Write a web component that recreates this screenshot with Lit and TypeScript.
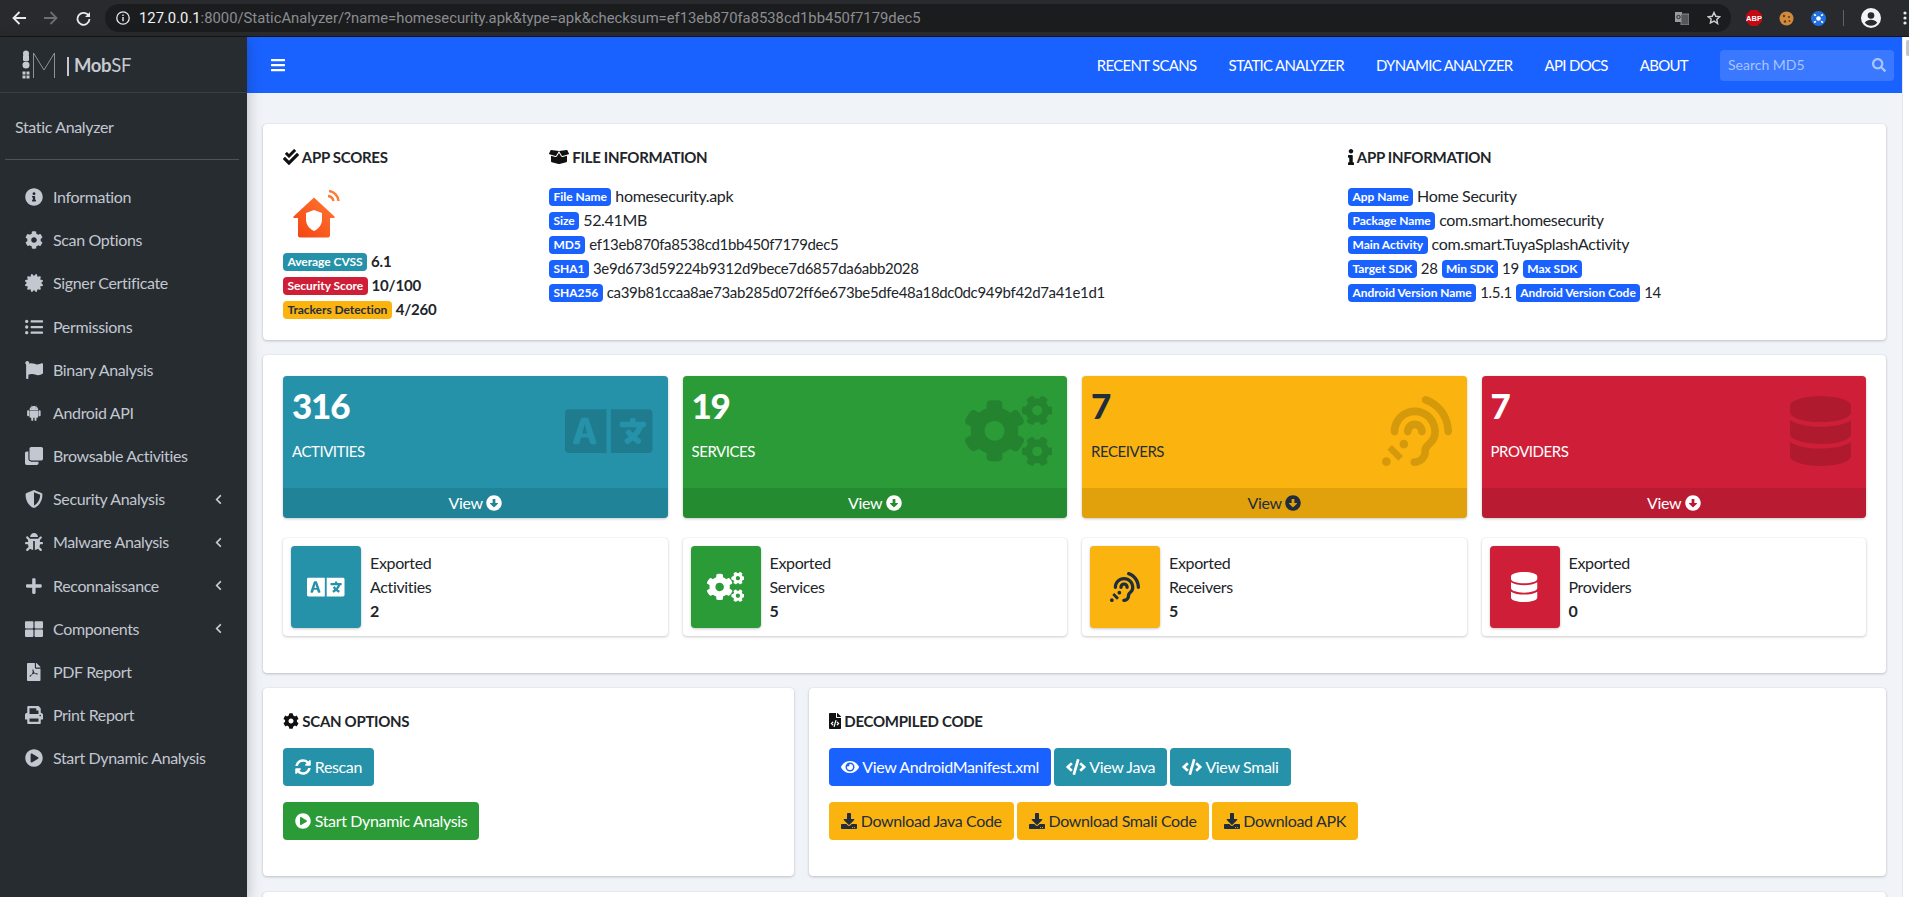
import { LitElement, html, css, svg } from 'lit';
import { customElement } from 'lit/decorators.js';

// font awesome 5 solid shapes, [viewBox width, path]
const FA: Record<string, [number, string]> = {
  info: [512, 'M256 8C119.043 8 8 119.083 8 256c0 136.997 111.043 248 248 248s248-111.003 248-248C504 119.083 392.957 8 256 8zm0 110c23.196 0 42 18.804 42 42s-18.804 42-42 42-42-18.804-42-42 18.804-42 42-42zm56 254c0 6.627-5.373 12-12 12h-88c-6.627 0-12-5.373-12-12v-24c0-6.627 5.373-12 12-12h12v-64h-12c-6.627 0-12-5.373-12-12v-24c0-6.627 5.373-12 12-12h64c6.627 0 12 5.373 12 12v100h12c6.627 0 12 5.373 12 12v24z'],
  cog: [512, 'M487.4 315.7l-42.6-24.6c4.3-23.2 4.3-47 0-70.2l42.6-24.6c4.9-2.8 7.1-8.6 5.5-14-11.1-35.6-30-67.8-54.7-94.6-3.8-4.1-10-5.1-14.8-2.3L380.8 110c-17.9-15.4-38.5-27.3-60.8-35.1V25.8c0-5.6-3.9-10.5-9.4-11.7-36.7-8.2-74.3-7.8-109.2 0-5.5 1.2-9.4 6.1-9.4 11.7V75c-22.2 7.9-42.8 19.8-60.8 35.1L88.7 85.5c-4.9-2.8-11-1.9-14.8 2.3-24.7 26.7-43.6 58.9-54.7 94.6-1.7 5.4.6 11.2 5.5 14L67.3 221c-4.3 23.2-4.3 47 0 70.2l-42.6 24.6c-4.9 2.8-7.1 8.6-5.5 14 11.1 35.6 30 67.8 54.7 94.6 3.8 4.1 10 5.1 14.8 2.3l42.6-24.6c17.9 15.4 38.5 27.3 60.8 35.1v49.2c0 5.6 3.9 10.5 9.4 11.7 36.7 8.2 74.3 7.8 109.2 0 5.5-1.2 9.4-6.1 9.4-11.7v-49.2c22.2-7.9 42.8-19.8 60.8-35.1l42.6 24.6c4.9 2.8 11 1.9 14.8-2.3 24.7-26.7 43.6-58.9 54.7-94.6 1.5-5.5-.7-11.3-5.6-14.1zM256 336c-44.1 0-80-35.9-80-80s35.9-80 80-80 80 35.9 80 80-35.9 80-80 80z'],
  certificate: [512, 'M458.622 255.92l45.985-45.005c13.708-12.977 7.316-36.039-10.664-40.339l-62.65-15.99 17.661-62.015c4.991-17.838-11.829-34.663-29.661-29.671l-61.994 17.667-15.984-62.671C337.085.197 313.765-6.276 300.99 7.228L256 53.57 211.011 7.229c-12.63-13.351-36.047-7.234-40.325 10.668l-15.984 62.671-61.995-17.667C74.87 57.907 58.056 74.738 63.046 92.572l17.661 62.015-62.65 15.99C.069 174.878-6.31 197.944 7.392 210.915l45.985 45.005-45.985 45.004c-13.708 12.977-7.316 36.039 10.664 40.339l62.65 15.99-17.661 62.015c-4.991 17.838 11.829 34.663 29.661 29.671l61.994-17.667 15.984 62.671c4.439 18.575 27.696 24.018 40.325 10.668L256 458.61l44.989 46.001c12.5 13.488 35.987 7.486 40.325-10.668l15.984-62.671 61.994 17.667c17.832 4.992 34.652-11.833 29.661-29.671l-17.661-62.015 62.65-15.99c17.98-4.3 24.372-27.362 10.664-40.339l-45.984-45.004z'],
  list: [512, 'M48 48a48 48 0 1 0 48 48 48 48 0 0 0-48-48zm0 160a48 48 0 1 0 48 48 48 48 0 0 0-48-48zm0 160a48 48 0 1 0 48 48 48 48 0 0 0-48-48zm448 16H176a16 16 0 0 0-16 16v32a16 16 0 0 0 16 16h320a16 16 0 0 0 16-16v-32a16 16 0 0 0-16-16zm0-320H176a16 16 0 0 0-16 16v32a16 16 0 0 0 16 16h320a16 16 0 0 0 16-16V80a16 16 0 0 0-16-16zm0 160H176a16 16 0 0 0-16 16v32a16 16 0 0 0 16 16h320a16 16 0 0 0 16-16v-32a16 16 0 0 0-16-16z'],
  flag: [512, 'M349.565 98.783C295.978 98.783 251.721 64 184.348 64c-24.955 0-47.309 4.384-68.045 12.013a55.947 55.947 0 0 0 3.586-23.562C118.117 24.015 94.806 1.206 66.338.048 34.345-1.254 8 24.296 8 56c0 19.026 9.497 35.825 24 45.945V488c0 13.255 10.745 24 24 24h16c13.255 0 24-10.745 24-24v-94.4c28.311-12.064 63.582-22.122 114.435-22.122 53.588 0 97.844 34.783 165.217 34.783 48.169 0 86.667-16.294 122.505-40.858C506.84 359.452 512 349.571 512 339.045v-243.1c0-23.393-24.269-38.87-45.485-29.016-34.338 15.948-76.454 31.854-116.95 31.854z'],
  android: [448, 'M89.6 204.5v115.8c0 15.4-12.1 27.7-27.5 27.7-15.3 0-30.1-12.4-30.1-27.7V204.5c0-15.1 14.8-27.5 30.1-27.5 15.1 0 27.5 12.4 27.5 27.5zm10.8 157c0 16.4 13.2 29.6 29.6 29.6h19.9l.3 61.1c0 36.9 55.2 36.6 55.2 0v-61.1h37.2v61.1c0 36.7 55.5 36.8 55.5 0v-61.1h20.2c16.2 0 29.4-13.2 29.4-29.6V182.1H100.4v179.4zm248-189.1H99.3c0-42.8 25.6-80 63.6-99.4l-19.1-35.3c-2.8-4.9 4.3-8 6.7-3.8l19.4 35.6c34.9-15.5 75-14.7 108.3 0L297.5 34c2.5-4.3 9.5-1.1 6.7 3.8L285.1 73c37.7 19.4 63.3 56.6 63.3 99.4zm-170.7-55.5c0-5.7-4.6-10.5-10.5-10.5-5.7 0-10.2 4.8-10.2 10.5s4.6 10.5 10.2 10.5c5.9 0 10.5-4.8 10.5-10.5zm113.4 0c0-5.7-4.6-10.5-10.2-10.5-5.9 0-10.5 4.8-10.5 10.5s4.6 10.5 10.5 10.5c5.6 0 10.2-4.8 10.2-10.5zm94.8 60.1c-15.1 0-27.5 12.1-27.5 27.5v115.8c0 15.4 12.4 27.7 27.5 27.7 15.4 0 30.1-12.4 30.1-27.7V204.5c0-15.4-14.8-27.5-30.1-27.5z'],
  clone: [512, 'M464 0c26.51 0 48 21.49 48 48v288c0 26.51-21.49 48-48 48H176c-26.51 0-48-21.49-48-48V48c0-26.51 21.49-48 48-48h288M176 416c-44.112 0-80-35.888-80-80V128H48c-26.51 0-48 21.49-48 48v288c0 26.51 21.49 48 48 48h288c26.51 0 48-21.49 48-48v-48H176z'],
  shield: [512, 'M466.5 83.7l-192-80a48.15 48.15 0 0 0-36.9 0l-192 80C27.7 91.1 16 108.6 16 128c0 198.5 114.5 335.7 221.5 380.3 11.8 4.9 25.1 4.9 36.9 0C360.1 472.6 496 349.3 496 128c0-19.4-11.7-36.9-29.5-44.3zM256.1 446.3l-.1-381 175.9 73.3c-3.3 151.4-82.1 261.1-175.8 307.7z'],
  bug: [512, 'M511.988 288.9c-.478 17.43-15.217 31.1-32.653 31.1H424v16c0 21.864-4.882 42.584-13.6 61.145l60.228 60.228c12.496 12.497 12.496 32.758 0 45.255-12.498 12.497-32.759 12.496-45.256 0l-54.736-54.736C345.886 467.965 314.351 480 280 480V236c0-6.627-5.373-12-12-12h-24c-6.627 0-12 5.373-12 12v244c-34.351 0-65.886-12.035-90.636-32.108l-54.736 54.736c-12.498 12.497-32.759 12.496-45.256 0-12.496-12.497-12.496-32.758 0-45.255l60.228-60.228C92.882 378.584 88 357.864 88 336v-16H32.666C15.23 320 .491 306.33.013 288.9-.484 270.816 14.028 256 32 256h56v-58.745l-46.628-46.628c-12.496-12.497-12.496-32.758 0-45.255 12.498-12.497 32.758-12.497 45.256 0L141.255 160h229.489l54.627-54.627c12.498-12.497 32.758-12.497 45.256 0 12.496 12.497 12.496 32.758 0 45.255L424 197.255V256h56c17.972 0 32.484 14.816 31.988 32.9zM257 0c-61.856 0-112 50.144-112 112h224C369 50.144 318.856 0 257 0z'],
  plus: [448, 'M416 208H272V64c0-17.67-14.33-32-32-32h-32c-17.67 0-32 14.33-32 32v144H32c-17.67 0-32 14.33-32 32v32c0 17.67 14.33 32 32 32h144v144c0 17.67 14.33 32 32 32h32c17.67 0 32-14.33 32-32V304h144c17.67 0 32-14.33 32-32v-32c0-17.67-14.33-32-32-32z'],
  grid: [512, 'M296 32h192c13.255 0 24 10.745 24 24v160c0 13.255-10.745 24-24 24H296c-13.255 0-24-10.745-24-24V56c0-13.255 10.745-24 24-24zm-80 0H24C10.745 32 0 42.745 0 56v160c0 13.255 10.745 24 24 24h192c13.255 0 24-10.745 24-24V56c0-13.255-10.745-24-24-24zM0 296v160c0 13.255 10.745 24 24 24h192c13.255 0 24-10.745 24-24V296c0-13.255-10.745-24-24-24H24c-13.255 0-24 10.745-24 24zm296 184h192c13.255 0 24-10.745 24-24V296c0-13.255-10.745-24-24-24H296c-13.255 0-24 10.745-24 24v160c0 13.255 10.745 24 24 24z'],
  pdf: [384, 'M224 136V0H24C10.7 0 0 10.7 0 24v464c0 13.3 10.7 24 24 24h336c13.3 0 24-10.7 24-24V160H248c-13.2 0-24-10.8-24-24zm-40 60c8 30 22 70 40 95 24 0 62-4 76 8 14 12 6 30-14 30-22 0-50-14-70-28-26 6-50 14-72 26-20 36-38 62-56 62-16 0-24-20-8-34 12-10 34-20 52-28 12-22 24-50 32-78-8-22-14-58-2-66 10-8 20 0 22 13zM384 121.9v6.1H256V0h6.1c6.4 0 12.5 2.5 17 7l97.9 98c4.5 4.5 7 10.6 7 16.9z'],
  print: [512, 'M448 192V77.25c0-8.49-3.37-16.62-9.37-22.63L393.37 9.37c-6-6-14.14-9.37-22.63-9.37H96C78.33 0 64 14.33 64 32v160c-35.35 0-64 28.65-64 64v112c0 8.84 7.16 16 16 16h48v96c0 17.67 14.33 32 32 32h320c17.67 0 32-14.33 32-32v-96h48c8.84 0 16-7.16 16-16V256c0-35.35-28.65-64-64-64zm-64 256H128v-96h256v96zm0-224H128V64h192v48c0 8.84 7.16 16 16 16h48v96zm48 72c-13.25 0-24-10.75-24-24 0-13.26 10.75-24 24-24s24 10.74 24 24c0 13.25-10.75 24-24 24z'],
  play: [512, 'M256 8C119 8 8 119 8 256s111 248 248 248 248-111 248-248S393 8 256 8zm115.7 272l-176 101c-15.8 8.8-35.7-2.5-35.7-21V152c0-18.4 19.8-29.8 35.7-21l176 107c16.4 9.2 16.4 32.9 0 42z'],
  chevron: [320, 'M34.52 239.03L228.87 44.69c9.37-9.37 24.57-9.37 33.94 0l22.67 22.67c9.36 9.36 9.37 24.52.04 33.9L131.49 256l154.02 154.75c9.34 9.38 9.32 24.54-.04 33.9l-22.67 22.67c-9.37 9.37-24.57 9.37-33.94 0L34.52 272.97c-9.37-9.37-9.37-24.57 0-33.94z'],
  bars: [448, 'M16 132h416c8.837 0 16-7.163 16-16V76c0-8.837-7.163-16-16-16H16C7.163 60 0 67.163 0 76v40c0 8.837 7.163 16 16 16zm0 160h416c8.837 0 16-7.163 16-16v-40c0-8.837-7.163-16-16-16H16c-8.837 0-16 7.163-16 16v40c0 8.837 7.163 16 16 16zm0 160h416c8.837 0 16-7.163 16-16v-40c0-8.837-7.163-16-16-16H16c-8.837 0-16 7.163-16 16v40c0 8.837 7.163 16 16 16z'],
  search: [512, 'M505 442.7L405.3 343c-4.5-4.5-10.6-7-17-7H372c27.6-35.3 44-79.7 44-128C416 93.1 322.9 0 208 0S0 93.1 0 208s93.1 208 208 208c48.3 0 92.7-16.4 128-44v16.3c0 6.4 2.5 12.5 7 17l99.7 99.7c9.4 9.4 24.6 9.4 33.9 0l28.3-28.3c9.4-9.4 9.4-24.6.1-34zM208 336c-70.7 0-128-57.2-128-128 0-70.7 57.2-128 128-128 70.7 0 128 57.2 128 128 0 70.7-57.2 128-128 128z'],
  checks: [512, 'M505 174.8l-39.6-39.6c-9.4-9.4-24.6-9.4-33.9 0L192 374.7 80.6 263.2c-9.4-9.4-24.6-9.4-33.9 0L7 302.9c-9.4 9.4-9.4 24.6 0 34L175 505c9.4 9.4 24.6 9.4 33.9 0l296-296.2c9.4-9.5 9.4-24.7.1-34zm-324.3 106c6.2 6.3 16.4 6.3 22.6 0l208-208.2c6.2-6.3 6.2-16.4 0-22.6L366.1 4.7c-6.2-6.3-16.4-6.3-22.6 0L192 156.2l-55.4-55.5c-6.2-6.3-16.4-6.3-22.6 0L68.7 146c-6.2 6.3-6.2 16.4 0 22.6l112 112.2z'],
  box: [640, 'M425.7 256c-16.9 0-32.8-9-41.4-23.4L320 126l-64.2 106.6c-8.7 14.5-24.6 23.5-41.5 23.5-4.5 0-9-.6-13.3-1.9L64 215v178c0 14.7 10 27.5 24.2 31l216.2 54.1c10.2 2.5 20.9 2.5 31 0L551.8 424c14.2-3.6 24.2-16.4 24.2-31V215l-137 39.1c-4.3 1.3-8.8 1.9-13.3 1.9zm212.6-112.2L586.8 41c-3.1-6.2-9.8-9.8-16.7-8.9L320 64l91.7 152.1c3.8 6.3 11.4 9.3 18.5 7.3l197.9-56.5c9.9-2.9 14.7-13.9 10.2-23.1zM53.2 41L1.7 143.8c-4.6 9.2.3 20.2 10.1 23l197.9 56.5c7.1 2 14.7-1 18.5-7.3L320 64 69.8 32.1c-6.9-.8-13.5 2.7-16.6 8.9z'],
  i: [192, 'M20 424.229h20V279.771H20c-11.046 0-20-8.954-20-20V212c0-11.046 8.954-20 20-20h112c11.046 0 20 8.954 20 20v212.229h20c11.046 0 20 8.954 20 20V492c0 11.046-8.954 20-20 20H20c-11.046 0-20-8.954-20-20v-47.771c0-11.046 8.954-20 20-20zM96 0C56.235 0 24 32.235 24 72s32.235 72 72 72 72-32.235 72-72S135.764 0 96 0z'],
  fileCode: [384, 'M384 121.941V128H256V0h6.059c6.365 0 12.47 2.529 16.97 7.029l97.941 97.941A24.005 24.005 0 0 1 384 121.941zM248 160c-13.2 0-24-10.8-24-24V0H24C10.745 0 0 10.745 0 24v464c0 13.255 10.745 24 24 24h336c13.255 0 24-10.745 24-24V160H248zM123.206 400.505a5.4 5.4 0 0 1-7.633.246l-64.866-60.812a5.4 5.4 0 0 1 0-7.879l64.866-60.812a5.4 5.4 0 0 1 7.633.246l19.579 20.885a5.4 5.4 0 0 1-.372 7.747L101.65 336l40.763 35.874a5.4 5.4 0 0 1 .372 7.747l-19.579 20.884zm51.295 50.479l-27.453-7.97a5.402 5.402 0 0 1-3.681-6.692l61.44-211.626a5.402 5.402 0 0 1 6.692-3.681l27.452 7.97a5.4 5.4 0 0 1 3.68 6.692l-61.44 211.626a5.397 5.397 0 0 1-6.69 3.681zm160.792-111.045l-64.866 60.812a5.4 5.4 0 0 1-7.633-.246l-19.58-20.885a5.4 5.4 0 0 1 .372-7.747L284.35 336l-40.763-35.874a5.4 5.4 0 0 1-.372-7.747l19.58-20.885a5.4 5.4 0 0 1 7.633-.246l64.866 60.812a5.4 5.4 0 0 1-.001 7.879z'],
  language: [640, 'M152.1 236.2c-3.5-12.1-7.8-33.2-7.8-33.2h-.5s-4.3 21.1-7.8 33.2l-11.1 37.5H163zM616 96H336v320h280c13.3 0 24-10.7 24-24V120c0-13.3-10.7-24-24-24zm-24 120c0 6.6-5.4 12-12 12h-11.4c-6.9 23.6-21.7 47.4-42.7 69.9 8.4 6.4 17.1 12.5 26.1 18 5.5 3.4 7.3 10.5 4.1 16.2l-7.9 13.9c-3.4 5.9-10.9 7.8-16.7 4.3-12.6-7.8-24.5-16.1-35.4-24.9-10.9 8.7-22.7 17.1-35.4 24.9-5.8 3.5-13.3 1.6-16.7-4.3l-7.9-13.9c-3.2-5.6-1.4-12.8 4.2-16.2 9.3-5.7 18-11.7 26.1-18-7.9-8.4-14.9-17-21-25.7-4-5.7-2.2-13.6 3.7-17.1l6.5-3.9 7.3-4.3c5.4-3.2 12.4-1.7 16 3.4 5 7 10.8 14 17.4 20.9 13.5-14.2 23.8-28.9 30-43.2H412c-6.6 0-12-5.4-12-12v-16c0-6.6 5.4-12 12-12h64v-16c0-6.6 5.4-12 12-12h16c6.6 0 12 5.4 12 12v16h64c6.6 0 12 5.4 12 12zM0 120v272c0 13.3 10.7 24 24 24h280V96H24c-13.3 0-24 10.7-24 24zm58.9 216.1L116.4 167c1.7-4.9 6.2-8.1 11.4-8.1h32.5c5.1 0 9.7 3.3 11.4 8.1l57.5 169.1c2.6 7.8-3.1 15.9-11.4 15.9h-22.9a12 12 0 0 1-11.5-8.6L171 303h-54.9l-9.7 40.3c-1.5 5.1-6.2 8.7-11.5 8.7H70.3c-8.2 0-14-8.1-11.4-15.9z'],
  cogs: [640, 'M512.1 191l-8.2 14.3c-3 5.3-9.4 7.5-15.1 5.4-11.8-4.4-22.6-10.7-32.1-18.6-4.6-3.8-5.8-10.5-2.8-15.7l8.2-14.3c-6.9-8-12.3-17.3-15.9-27.4h-16.5c-6 0-11.2-4.3-12.2-10.3-2-12-2.1-24.6 0-37.1 1-6 6.2-10.4 12.2-10.4h16.5c3.6-10.1 9-19.4 15.9-27.4l-8.2-14.3c-3-5.2-1.9-11.9 2.8-15.7 9.5-7.9 20.4-14.2 32.1-18.6 5.7-2.1 12.1.1 15.1 5.4l8.2 14.3c10.5-1.9 21.2-1.9 31.7 0L552 6.3c3-5.3 9.4-7.5 15.1-5.4 11.8 4.4 22.6 10.7 32.1 18.6 4.6 3.8 5.8 10.5 2.8 15.7l-8.2 14.3c6.9 8 12.3 17.3 15.9 27.4h16.5c6 0 11.2 4.3 12.2 10.3 2 12 2.1 24.6 0 37.1-1 6-6.2 10.4-12.2 10.4h-16.5c-3.6 10.1-9 19.4-15.9 27.4l8.2 14.3c3 5.2 1.9 11.9-2.8 15.7-9.5 7.9-20.4 14.2-32.1 18.6-5.7 2.1-12.1-.1-15.1-5.4l-8.2-14.3c-10.4 1.9-21.2 1.9-31.7 0zm-10.5-58.8c38.5 29.6 82.4-14.3 52.8-52.8-38.5-29.7-82.4 14.3-52.8 52.8zM386.3 286.1l33.7 16.8c10.1 5.8 14.5 18.1 10.5 29.1-8.9 24.2-26.4 46.4-42.6 65.8-7.4 8.9-20.2 11.1-30.3 5.3l-29.1-16.8c-16 13.7-34.6 24.6-54.9 31.7v33.6c0 11.6-8.3 21.6-19.7 23.6-24.6 4.2-50.4 4.4-75.9 0-11.5-2-20-11.9-20-23.6V418c-20.3-7.2-38.9-18-54.9-31.7L74 403c-10 5.8-22.9 3.6-30.3-5.3-16.2-19.4-33.3-41.6-42.2-65.7-4-10.9.4-23.2 10.5-29.1l33.3-16.8c-3.9-20.9-3.9-42.4 0-63.4L12 205.8c-10.1-5.8-14.6-18.1-10.5-29 8.9-24.2 26-46.4 42.2-65.8 7.4-8.9 20.2-11.1 30.3-5.3l29.1 16.8c16-13.7 34.6-24.6 54.9-31.7V57.1c0-11.5 8.2-21.5 19.6-23.5 24.6-4.2 50.5-4.4 76-.1 11.5 2 20 11.9 20 23.6v33.6c20.3 7.2 38.9 18 54.9 31.7l29.1-16.8c10-5.8 22.9-3.6 30.3 5.3 16.2 19.4 33.2 41.6 42.1 65.8 4 10.9.1 23.2-10 29.1l-33.7 16.8c3.9 21 3.9 42.5 0 63.5zm-117.6 21.1c59.2-77-28.7-164.9-105.7-105.7-59.2 77 28.7 164.9 105.7 105.7zm243.4 182.7l-8.2 14.3c-3 5.3-9.4 7.5-15.1 5.4-11.8-4.4-22.6-10.7-32.1-18.6-4.6-3.8-5.8-10.5-2.8-15.7l8.2-14.3c-6.9-8-12.3-17.3-15.9-27.4h-16.5c-6 0-11.2-4.3-12.2-10.3-2-12-2.1-24.6 0-37.1 1-6 6.2-10.4 12.2-10.4h16.5c3.6-10.1 9-19.4 15.9-27.4l-8.2-14.3c-3-5.2-1.9-11.9 2.8-15.7 9.5-7.9 20.4-14.2 32.1-18.6 5.7-2.1 12.1.1 15.1 5.4l8.2 14.3c10.5-1.9 21.2-1.9 31.7 0l8.2-14.3c3-5.3 9.4-7.5 15.1-5.4 11.8 4.4 22.6 10.7 32.1 18.6 4.6 3.8 5.8 10.5 2.8 15.7l-8.2 14.3c6.9 8 12.3 17.3 15.9 27.4h16.5c6 0 11.2 4.3 12.2 10.3 2 12 2.1 24.6 0 37.1-1 6-6.2 10.4-12.2 10.4h-16.5c-3.6 10.1-9 19.4-15.9 27.4l8.2 14.3c3 5.2 1.9 11.9-2.8 15.7-9.5 7.9-20.4 14.2-32.1 18.6-5.7 2.1-12.1-.1-15.1-5.4l-8.2-14.3c-10.4 1.9-21.2 1.9-31.7 0zM501.6 431c38.5 29.6 82.4-14.3 52.8-52.8-38.5-29.6-82.4 14.3-52.8 52.8z'],
  ear: [512, 'M216 260c0 15.464-12.536 28-28 28s-28-12.536-28-28c0-44.112 35.888-80 80-80s80 35.888 80 80c0 15.464-12.536 28-28 28s-28-12.536-28-28c0-13.234-10.767-24-24-24s-24 10.766-24 24zm24-176c-97.047 0-176 78.953-176 176 0 15.464 12.536 28 28 28s28-12.536 28-28c0-66.168 53.832-120 120-120s120 53.832 120 120c0 75.164-71.009 70.311-71.997 143.622L288 404c0 28.673-23.327 52-52 52-15.464 0-28 12.536-28 28s12.536 28 28 28c59.475 0 107.876-48.328 108-107.774.595-34.428 72-48.24 72-144.226 0-97.047-78.953-176-176-176zm-80 236c-17.673 0-32 14.327-32 32s14.327 32 32 32 32-14.327 32-32-14.327-32-32-32zM32 448c-17.673 0-32 14.327-32 32s14.327 32 32 32 32-14.327 32-32-14.327-32-32-32zm480-187.993c0-1.518-.012-3.025-.045-4.531C510.076 140.525 436.157 38.47 327.994 1.511c-14.633-4.998-30.549 2.809-35.55 17.442-5 14.633 2.81 30.549 17.442 35.55 85.906 29.354 144.61 110.513 146.077 201.953l.003.188c.026 1.118.033 2.236.033 3.363 0 15.464 12.536 28 28 28s28.001-12.536 28.001-28zM152.971 439.029l-80-80L39.03 392.97l80 80 33.941-33.941z'],
  database: [448, 'M448 73.143v45.714C448 159.143 347.667 192 224 192S0 159.143 0 118.857V73.143C0 32.857 100.333 0 224 0s224 32.857 224 73.143zM448 176v102.857C448 319.143 347.667 352 224 352S0 319.143 0 278.857V176c48.125 33.143 136.208 48.572 224 48.572S399.874 209.143 448 176zm0 160v102.857C448 479.143 347.667 512 224 512S0 479.143 0 438.857V336c48.125 33.143 136.208 48.572 224 48.572S399.874 369.143 448 336z'],
  arrowDown: [512, 'M504 256c0 137-111 248-248 248S8 393 8 256 119 8 256 8s248 111 248 248zM212 140v116h-70.9c-10.7 0-16.1 13-8.5 20.5l114.9 114.3c4.7 4.7 12.2 4.7 16.9 0l114.9-114.3c7.6-7.6 2.2-20.5-8.5-20.5H300V140c0-6.6-5.4-12-12-12h-64c-6.6 0-12 5.4-12 12z'],
  eye: [576, 'M572.52 241.4C518.29 135.59 410.93 64 288 64S57.68 135.64 3.48 241.41a32.35 32.35 0 0 0 0 29.19C57.71 376.41 165.07 448 288 448s230.32-71.64 284.52-177.41a32.35 32.35 0 0 0 0-29.19zM288 400a144 144 0 1 1 144-144 143.93 143.93 0 0 1-144 144zm0-240a95.31 95.31 0 0 0-25.31 3.79 47.85 47.85 0 0 1-66.9 66.9A95.78 95.78 0 1 0 288 160z'],
  code: [640, 'M278.9 511.5l-61-17.7c-6.4-1.8-10-8.5-8.2-14.9L346.2 8.7c1.8-6.4 8.5-10 14.9-8.2l61 17.7c6.4 1.8 10 8.5 8.2 14.9L293.8 503.3c-1.9 6.4-8.5 10.1-14.9 8.2zm-114-112.2l43.5-46.4c4.6-4.9 4.3-12.7-.8-17.2L117 256l90.6-79.7c5.1-4.5 5.5-12.3.8-17.2l-43.5-46.4c-4.5-4.8-12.1-5.1-17-.5L3.8 247.2c-5.1 4.7-5.1 12.8 0 17.5l144.1 135.1c4.9 4.6 12.5 4.4 17-.5zm327.2.6l144.1-135.1c5.1-4.7 5.1-12.8 0-17.5L492.1 112.1c-4.8-4.5-12.4-4.3-17 .5L431.6 159c-4.6 4.9-4.3 12.7.8 17.2L523 256l-90.6 79.7c-5.1 4.5-5.5 12.3-.8 17.2l43.5 46.4c4.5 4.9 12.1 5.1 17 .6z'],
  sync: [512, 'M370.72 133.28C339.458 104.008 298.888 87.962 255.848 88c-77.458.068-144.328 53.178-162.791 126.85-1.344 5.363-6.122 9.15-11.651 9.15H24.103c-7.498 0-13.194-6.807-11.807-14.176C33.933 94.924 134.813 8 256 8c66.448 0 126.791 26.136 171.315 68.685L463.03 40.97C478.149 25.851 504 36.559 504 57.941V192c0 13.255-10.745 24-24 24H345.941c-21.382 0-32.09-25.851-16.971-40.971l41.75-41.749zM32 296h134.059c21.382 0 32.09 25.851 16.971 40.971l-41.75 41.75c31.262 29.273 71.835 45.319 114.876 45.28 77.418-.07 144.315-53.144 162.787-126.849 1.344-5.363 6.122-9.15 11.651-9.15h57.304c7.498 0 13.194 6.807 11.807 14.176C478.067 417.076 377.187 504 256 504c-66.448 0-126.791-26.136-171.315-68.685L48.97 471.03C33.851 486.149 8 475.441 8 454.059V320c0-13.255 10.745-24 24-24z'],
  download: [512, 'M216 0h80c13.3 0 24 10.7 24 24v168h87.7c17.8 0 26.7 21.5 14.1 34.1L269.7 378.3c-7.5 7.5-19.8 7.5-27.3 0L90.1 226.1c-12.6-12.6-3.7-34.1 14.1-34.1H192V24c0-13.3 10.7-24 24-24zm296 376v112c0 13.3-10.7 24-24 24H24c-13.3 0-24-10.7-24-24V376c0-13.3 10.7-24 24-24h146.7l49 49c20.1 20.1 52.5 20.1 72.6 0l49-49H488c13.3 0 24 10.7 24 24zm-124 88c0-11-9-20-20-20s-20 9-20 20 9 20 20 20 20-9 20-20zm64 0c0-11-9-20-20-20s-20 9-20 20 9 20 20 20 20-9 20-20z'],
};

const fa = (name: string, cls = '') => {
  const [w, d] = FA[name];
  return html`<svg class="fa ${cls}" viewBox="0 0 ${w} 512">${svg`<path d=${d}></path>`}</svg>`;
};

const MENU = [
  ['info', 'Information'], ['cog', 'Scan Options'], ['certificate', 'Signer Certificate'],
  ['list', 'Permissions'], ['flag', 'Binary Analysis'], ['android', 'Android API'],
  ['clone', 'Browsable Activities'], ['shield', 'Security Analysis', 1], ['bug', 'Malware Analysis', 1],
  ['plus', 'Reconnaissance', 1], ['grid', 'Components', 1], ['pdf', 'PDF Report'],
  ['print', 'Print Report'], ['play', 'Start Dynamic Analysis'],
] as [string, string, number?][];

const NAV = ['Recent Scans', 'Static Analyzer', 'Dynamic Analyzer', 'API Docs', 'About'];

const FILE_INFO = [
  ['File Name', 'homesecurity.apk'],
  ['Size', '52.41MB'],
  ['MD5', 'ef13eb870fa8538cd1bb450f7179dec5', 'hex'],
  ['SHA1', '3e9d673d59224b9312d9bece7d6857da6abb2028', 'hex'],
  ['SHA256', 'ca39b81ccaa8ae73ab285d072ff6e673be5dfe48a18dc0dc949bf42d7a41e1d1', 'hex'],
];

const APP_INFO = [
  [['App Name', 'Home Security']],
  [['Package Name', 'com.smart.homesecurity']],
  [['Main Activity', 'com.smart.TuyaSplashActivity']],
  [['Target SDK', '28', 'hex'], ['Min SDK', '19', 'hex'], ['Max SDK', '']],
  [['Android Version Name', '1.5.1', 'hex'], ['Android Version Code', '14', 'hex']],
];

const STATS = [
  { n: '316', label: 'Activities', exp: 'Activities', val: '2', icon: 'language', color: 'info' },
  { n: '19', label: 'Services', exp: 'Services', val: '5', icon: 'cogs', color: 'success' },
  { n: '7', label: 'Receivers', exp: 'Receivers', val: '5', icon: 'ear', color: 'warning' },
  { n: '7', label: 'Providers', exp: 'Providers', val: '0', icon: 'database', color: 'danger' },
];

@customElement('app-root')
export class AppRoot extends LitElement {
  static styles = css`
    :host {
      display: block;
      height: 897px;
      overflow: hidden;
      font-family: 'Lato', 'Noto Sans', sans-serif;
      font-size: 16px;
      line-height: 24px;
      letter-spacing: -0.35px;
      color: #212529;
    }
    .fa { height: 1em; width: auto; fill: currentColor; display: inline-block; vertical-align: -0.125em; }

    /* browser chrome */
    .chrome {
      height: 36px;
      border-bottom: 1px solid #141517;
      background: #292a2d;
      display: flex;
      align-items: center;
      color: #e8eaed;
      letter-spacing: 0;
    }
    .chrome svg.tb { display: block; flex: none; }
    .nav-btns { display: flex; gap: 18px; padding-left: 12px; width: 93px; flex: none; box-sizing: content-box; }
    .omni {
      width: 1626px;
      height: 28px;
      flex: none;
      border-radius: 14px;
      background: #1b1c1e;
      display: flex;
      align-items: center;
      box-sizing: border-box;
      padding-left: 11px;
      font-family: 'Roboto', sans-serif;
      font-size: 14.8px;
      color: #8c8d91;
    }
    .omni b { font-weight: 400; color: #f1f3f4; }
    .omni .url { margin-left: 9px; white-space: nowrap; }
    .omni .end { margin-left: auto; display: flex; gap: 18px; padding-right: 10px; align-items: center; }
    .ext { display: flex; align-items: center; margin-left: 15px; gap: 17px; }
    .sep { width: 1px; height: 16px; background: #5f6368; }

    .body { display: flex; height: 860px; }

    /* sidebar */
    .sidebar {
      width: 247px;
      flex: none;
      background: #272c30;
      color: #c2c7d0;
      position: relative;
      z-index: 2;
      box-shadow: 0 4px 14px rgba(0, 0, 0, 0.25);
    }
    .brand {
      height: 55px;
      border-bottom: 1px solid #3a4046;
      display: flex;
      align-items: center;
      padding-left: 22px;
      gap: 11px;
      color: #c6cad0;
      font-size: 18.5px;
    }
    .brand b { font-weight: 700; }
    .brand .bar { width: 2px; height: 19px; background: #c6cad0; margin: 3px -6px 0 0; }
    .brand .name { margin-top: 1px; }
    .section {
      margin: 0 8px 15.4px 5px;
      padding: 22px 10px 21px;
      line-height: 23px;
      border-bottom: 1px solid #4b545c;
      height: 23px;
    }
    .menu { list-style: none; margin: 0; padding: 0; }
    .menu li {
      height: 43.2px;
      display: flex;
      align-items: center;
      padding: 0 25px;
      white-space: nowrap;
    }
    .menu .mi { width: 18px; margin-right: 10px; text-align: center; font-size: 18px; line-height: 18px; flex: none; }
    .menu .mi .fa { display: block; margin: 0 auto; }
    .menu .chev { margin-left: auto; font-size: 11px; display: flex; }

    /* main */
    .main { flex: 1; background: #f0f3f8; min-width: 0; }
    .topbar {
      height: 56px;
      background: #1a62ff;
      display: flex;
      align-items: center;
      color: #fff;
      padding: 0 8px 0 24px;
    }
    .topbar .burger { font-size: 16px; display: flex; }
    .topbar nav {
      margin-left: auto;
      display: flex;
      gap: 32px;
      text-transform: uppercase;
      white-space: nowrap;
      font-size: 15px;
      letter-spacing: -0.7px;
    }
    .search {
      margin-left: 32px;
      width: 174px;
      height: 31px;
      border-radius: 4px;
      background: #3a78ff;
      display: flex;
      align-items: center;
      padding: 0 8px;
      box-sizing: border-box;
      color: #a9c4ff;
    }
    .search input {
      flex: 1;
      min-width: 0;
      background: none;
      border: 0;
      outline: 0;
      padding: 0;
      font: inherit;
      font-size: 14px;
      color: inherit;
    }
    .search input::placeholder { color: #a9c4ff; opacity: 1; }
    .search .fa { font-size: 14px; }

    .content { padding: 31px 16px 0; display: flex; flex-direction: column; gap: 15px; }
    .card {
      background: #fff;
      border-radius: 4px;
      box-shadow: 0 0 1px rgba(0, 0, 0, 0.125), 0 1px 3px rgba(0, 0, 0, 0.2);
      padding: 21px 20px;
      box-sizing: border-box;
    }
    .title {
      margin: 0;
      font-size: 15px;
      line-height: 24px;
      font-weight: 700;
      text-transform: uppercase;
      white-space: nowrap;
      letter-spacing: -0.3px;
    }
    .title .fa { color: #111; font-size: 16px; }

    .summary { display: grid; grid-template-columns: 266px 799px 1fr; height: 216px; }
    .rows { margin-top: 16px; }
    .row { height: 24px; white-space: nowrap; display: flex; align-items: center; gap: 4px; }
    .val { margin-bottom: 2px; }
    .val.hex { font-size: 15px; letter-spacing: -0.33px; }
    .badge {
      display: inline-block;
      height: 18px;
      line-height: 18px;
      padding: 0 4.5px;
      border-radius: 4px;
      font-size: 12px;
      font-weight: 700;
      letter-spacing: -0.05px;
      background: #1a62ff;
      color: #fff;
    }
    .badge.info { background: #2592a9; }
    .badge.danger { background: #cf1f38; }
    .badge.warning { background: #fbb40f; color: #1f2d3d; }
    .logo { display: block; margin: 21px 0 12px 10px; }
    .score { font-weight: 700; font-size: 15px; letter-spacing: -0.2px; margin-bottom: 2px; }

    .analysis { height: 318px; padding-bottom: 0; }
    .grid4 { display: grid; grid-template-columns: repeat(4, 1fr); column-gap: 15px; row-gap: 20px; }
    .stat {
      position: relative;
      height: 142px;
      border-radius: 4px;
      overflow: hidden;
      display: flex;
      flex-direction: column;
      box-shadow: 0 0 1px rgba(0, 0, 0, 0.125), 0 1px 3px rgba(0, 0, 0, 0.2);
      color: #fff;
    }
    .inner { flex: 1; padding: 8px 9px; }
    .inner h3 { margin: 0 0 13px; font-size: 35px; line-height: 42px; font-weight: 900; letter-spacing: -1.2px; }
    .inner p { margin: 0; text-transform: uppercase; font-size: 15px; letter-spacing: -0.45px; }
    .bg { position: absolute; top: 20px; right: 15px; font-size: 70px; color: rgba(0, 0, 0, 0.15); }
    .bg .fa { display: block; }
    .more {
      height: 30px;
      line-height: 30px;
      text-align: center;
      background: rgba(0, 0, 0, 0.1);
    }
    .info { background: #2592a9; }
    .success { background: #2a9b37; }
    .warning { background: #fbb40f; color: #1f2d3d; }
    .danger { background: #cf1f38; }

    .ibox {
      height: 98px;
      box-sizing: border-box;
      background: #fff;
      border-radius: 4px;
      box-shadow: 0 0 1px rgba(0, 0, 0, 0.125), 0 1px 3px rgba(0, 0, 0, 0.2);
      padding: 8px;
      display: flex;
      align-items: center;
      gap: 9px;
    }
    .ibox .icon {
      width: 70px;
      height: 82px;
      flex: none;
      border-radius: 4px;
      font-size: 30px;
      display: flex;
      align-items: center;
      justify-content: center;
      box-shadow: 0 0 1px rgba(0, 0, 0, 0.125), 0 1px 3px rgba(0, 0, 0, 0.2);
    }
    .ibox .icon:not(.warning) { color: #fff; }
    .ibox b { display: block; }

    .split { display: grid; grid-template-columns: 531px 1fr; gap: 15px; margin-bottom: 1px; }
    .split .card { height: 188px; }
    .btns { display: flex; gap: 3px; margin-top: 15px; }
    .btns + .btns { margin-top: 16px; }
    .btn {
      height: 38px;
      line-height: 38px;
      padding: 0 12px;
      border-radius: 4px;
      color: #fff;
      white-space: nowrap;
    }
    .btn.warning { color: #1f2d3d; }
    .btn.primary { background: #1a62ff; }

    .next { height: 100px; }

    .scrollbar { width: 7px; flex: none; background: #fff; border-left: 1px solid #e4e6ea; box-sizing: border-box; padding: 3px 0 0 3px; }
    .scrollbar div { width: 3px; height: 16px; border-radius: 2px 0 0 2px; background: #c4c5c8; }
  `;

  private chromeBar() {
    return html`<div class="chrome">
      <div class="nav-btns">
        <svg class="tb" width="14" height="14" viewBox="0 0 14 14" fill="none" stroke="#e8eaed" stroke-width="1.8"><path d="M14 7H1.5M7.5 1L1.5 7l6 6"/></svg>
        <svg class="tb" width="14" height="14" viewBox="0 0 14 14" fill="none" stroke="#6d6e72" stroke-width="1.8"><path d="M0 7h12.5M6.5 1l6 6-6 6"/></svg>
        <svg class="tb" width="15" height="15" viewBox="0 0 15 15" fill="none" stroke="#e8eaed" stroke-width="1.8"><path d="M12.8 5A6 6 0 1 0 13.5 8"/><path d="M14 1v5H9" fill="#e8eaed" stroke="none"/></svg>
      </div>
      <div class="omni">
        <svg class="tb" width="14" height="14" viewBox="0 0 14 14"><circle cx="7" cy="7" r="6.2" fill="none" stroke="#e8eaed" stroke-width="1.3"/><path d="M6.3 6h1.4v4.3H6.3zM6.3 3.6h1.4V5H6.3z" fill="#e8eaed"/></svg>
        <span class="url"><b>127.0.0.1</b>:8000/StaticAnalyzer/?name=homesecurity.apk&amp;type=apk&amp;checksum=ef13eb870fa8538cd1bb450f7179dec5</span>
        <span class="end">
          <svg class="tb" width="14" height="14" viewBox="0 0 14 14"><path d="M0 1h7v10H0z" fill="#9a9b9e"/><path d="M6 3h8v11H6z" fill="#55565a" stroke="#9a9b9e" stroke-width=".8"/><circle cx="3.5" cy="6" r="1.7" fill="none" stroke="#292a2d"/></svg>
          <svg class="tb" width="14" height="14" viewBox="0 0 24 24" fill="none" stroke="#d0d1d4" stroke-width="2.4"><path d="M12 2.5l3 6.5 7 .8-5.2 4.8 1.4 7L12 17.2 5.8 20.6l1.4-7L2 9.8l7-.8z"/></svg>
        </span>
      </div>
      <div class="ext">
        <svg class="tb" width="16" height="16" viewBox="0 0 16 16"><path d="M4.7 0h6.6L16 4.7v6.6L11.3 16H4.7L0 11.3V4.7z" fill="#c20a13"/><text x="8" y="10.8" text-anchor="middle" font-family="Liberation Sans" font-size="7.5" font-weight="700" fill="#fff">ABP</text></svg>
        <svg class="tb" width="15" height="15" viewBox="0 0 15 15"><circle cx="7.5" cy="7.5" r="7" fill="#d08b3c"/><circle cx="5" cy="5" r="1.2" fill="#6b3a14"/><circle cx="10" cy="6" r="1.1" fill="#6b3a14"/><circle cx="6" cy="10.5" r="1.2" fill="#6b3a14"/><circle cx="10.5" cy="10" r=".9" fill="#6b3a14"/></svg>
        <svg class="tb" width="15" height="15" viewBox="0 0 15 15"><circle cx="7.5" cy="7.5" r="7.5" fill="#1f6fe0"/><circle cx="7.5" cy="7.5" r="2.3" fill="#fff"/><path d="M3 3.5l2 1.2M12 3.5l-2 1.2M3 11.5l2-1.2M12 11.5l-2-1.2" stroke="#fff" stroke-width="1.5"/></svg>
        <div class="sep"></div>
        <svg class="tb" width="20" height="20" viewBox="0 0 20 20"><circle cx="10" cy="10" r="10" fill="#f1f3f4"/><circle cx="10" cy="7.5" r="3.3" fill="#292a2d"/><path d="M3.8 14.8c1.5-2.3 3.8-3 6.2-3s4.7.7 6.2 3c-1.5 1.8-3.8 2.9-6.2 2.9s-4.7-1.100-6.200-2.900z" fill="#292a2d"/></svg>
        <svg class="tb" style="margin-left:5px" width="4" height="14" viewBox="0 0 4 14" fill="#e8eaed"><circle cx="2" cy="2" r="1.6"/><circle cx="2" cy="7" r="1.6"/><circle cx="2" cy="12" r="1.6"/></svg>
      </div>
    </div>`;
  }

  private sidebar() {
    return html`<aside class="sidebar">
      <div class="brand">
        <svg width="34" height="30" viewBox="0 0 34 30">
          <circle cx="4" cy="3.5" r="3" fill="#c6cad0"/><rect x="1" y="5" width="6" height="6" rx="1" fill="#c6cad0"/>
          <circle cx="4" cy="15" r="3.5" fill="#c6cad0"/>
          <path d="M.5 21.5h3v3h-3zM4.500 21.500h3v3h-3zM.5 25.500h3v3h-3zM4.500 25.500h3v3h-3z" fill="#c6cad0"/>
          <path d="M11.500 28V3L22 20 32.500 3v25" fill="none" stroke="#8d9298" stroke-width="1"/>
        </svg>
        <span class="bar"></span>
        <span class="name"><b>Mob</b>SF</span>
      </div>
      <div class="section">Static Analyzer</div>
      <ul class="menu">
        ${MENU.map(
          ([icon, label, sub]) => html`<li>
            <span class="mi">${fa(icon)}</span>${label}
            ${sub ? html`<span class="chev">${fa('chevron')}</span>` : ''}
          </li>`,
        )}
      </ul>
    </aside>`;
  }

  private summary() {
    return html`<section class="card summary">
      <div>
        <h4 class="title">${fa('checks')} App Scores</h4>
        <svg class="logo" width="47" height="48" viewBox="0 0 47 48">
          <defs><linearGradient id="home" x1="0" y1="1" x2="1" y2="0"><stop offset="0" stop-color="#f4420f"/><stop offset="1" stop-color="#ff7a35"/></linearGradient></defs>
          <path fill="url(#home)" d="M21 7.500L.5 26.500c-.6.800-.2 1.500.7 1.500H5v17.500c0 1 .9 2 2 2h28c1.100 0 2-1 2-2V28h3.800c.9 0 1.300-.7.700-1.500L21 7.500z"/>
          <path fill="#fff" d="M21 20l-8 3v7c0 5 4 9 8 11 4-2 8-6 8-11v-7z"/>
          <path fill="none" stroke="#ff7a35" stroke-width="2.4" d="M36 1c5 .5 9 4.500 9.500 10M35 6c3 .3 5 2.500 5.500 5"/>
        </svg>
        <div class="row"><span class="badge info">Average CVSS</span><span class="score">6.1</span></div>
        <div class="row"><span class="badge danger">Security Score</span><span class="score">10/100</span></div>
        <div class="row"><span class="badge warning">Trackers Detection</span><span class="score">4/260</span></div>
      </div>
      <div>
        <h4 class="title">${fa('box')} File Information</h4>
        <div class="rows">
          ${FILE_INFO.map(([k, v, c]) => html`<div class="row"><span class="badge">${k}</span><span class="val ${c ?? ''}">${v}</span></div>`)}
        </div>
      </div>
      <div>
        <h4 class="title">${fa('i')} App Information</h4>
        <div class="rows">
          ${APP_INFO.map(
            (r) => html`<div class="row">${r.map(([k, v, c]) => html`<span class="badge">${k}</span>${v ? html`<span class="val ${c ?? ''}">${v}</span>` : ''}`)}</div>`,
          )}
        </div>
      </div>
    </section>`;
  }

  private analysis() {
    return html`<section class="card analysis">
      <div class="grid4">
        ${STATS.map(
          (s) => html`<div class="stat ${s.color}">
            <div class="inner"><h3>${s.n}</h3><p>${s.label}</p></div>
            <div class="bg">${fa(s.icon)}</div>
            <div class="more">View ${fa('arrowDown')}</div>
          </div>`,
        )}
        ${STATS.map(
          (s) => html`<div class="ibox">
            <div class="icon ${s.color}">${fa(s.icon)}</div>
            <div>Exported<br />${s.exp}<b>${s.val}</b></div>
          </div>`,
        )}
      </div>
    </section>`;
  }

  private actions() {
    return html`<div class="split">
      <section class="card">
        <h4 class="title">${fa('cog')} Scan Options</h4>
        <div class="btns"><span class="btn info">${fa('sync')} Rescan</span></div>
        <div class="btns"><span class="btn success">${fa('play')} Start Dynamic Analysis</span></div>
      </section>
      <section class="card">
        <h4 class="title">${fa('fileCode')} Decompiled Code</h4>
        <div class="btns">
          <span class="btn primary">${fa('eye')} View AndroidManifest.xml</span>
          <span class="btn info">${fa('code')} View Java</span>
          <span class="btn info">${fa('code')} View Smali</span>
        </div>
        <div class="btns">
          <span class="btn warning">${fa('download')} Download Java Code</span>
          <span class="btn warning">${fa('download')} Download Smali Code</span>
          <span class="btn warning">${fa('download')} Download APK</span>
        </div>
      </section>
    </div>`;
  }

  render() {
    return html`
      ${this.chromeBar()}
      <div class="body">
        ${this.sidebar()}
        <main class="main">
          <header class="topbar">
            <span class="burger">${fa('bars')}</span>
            <nav>${NAV.map((n) => html`<span>${n}</span>`)}</nav>
            <div class="search"><input placeholder="Search MD5" />${fa('search')}</div>
          </header>
          <div class="content">
            ${this.summary()} ${this.analysis()} ${this.actions()}
            <section class="card next"></section>
          </div>
        </main>
        <div class="scrollbar"><div></div></div>
      </div>
    `;
  }
}
